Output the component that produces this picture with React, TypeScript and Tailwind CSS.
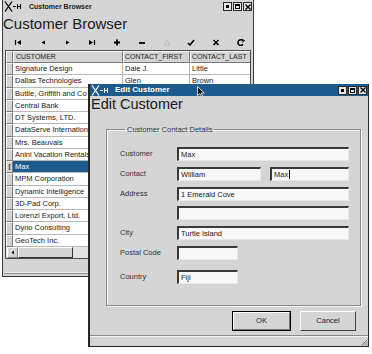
import React from "react";

// contact columns are only visible for the first two rows, the rest sit under the dialog
const rows = [
  ["Signature Design", "Dale J.", "Little"],
  ["Dallas Technologies", "Glen", "Brown"],
  ["Buttle, Griffith and Co", "", ""],
  ["Central Bank", "", ""],
  ["DT Systems, LTD.", "", ""],
  ["DataServe International", "", ""],
  ["Mrs. Beauvais", "", ""],
  ["Anini Vacation Rentals", "", ""],
  ["Max", "", ""],
  ["MPM Corporation", "", ""],
  ["Dynamic Intelligence", "", ""],
  ["3D-Pad Corp.", "", ""],
  ["Lorenzi Export, Ltd.", "", ""],
  ["Dyno Consulting", "", ""],
  ["GeoTech Inc.", "", ""],
];

const raised = "border border-t-white border-l-white border-r-[#7a7a7a] border-b-[#7a7a7a]";

function XLogo({ white }: { white?: boolean }) {
  const c = white ? "#ffffff" : "#000000";
  return (
    <svg width="19" height="11" viewBox="0 0 19 11" className="ml-[1px] shrink-0">
      <path d="M1 0.5 L8 10.5 M8 0.5 L1 10.5" stroke={c} strokeWidth="1.3" fill="none" />
      <path d="M9 5.5 H12 M13.5 3 V8 M13.5 5.5 H16.5 M16.5 3 V8" stroke={c} strokeWidth="1" fill="none" />
    </svg>
  );
}

function WinControls() {
  const box = "flex h-[9px] w-[9px] items-center justify-center border border-[#2a2a2a] bg-[#e6e6e6]";
  return (
    <div className="ml-auto mr-[1px] flex gap-[1px]">
      <div className={box}>
        <div className="h-[3px] w-[3px] bg-black" />
      </div>
      <div className={box}>
        <div className="h-[5px] w-[5px] border border-t-2 border-black" />
      </div>
      <div className={box}>
        <svg width="6" height="6" viewBox="0 0 6 6">
          <path d="M0.5 0.5 L5.5 5.5 M5.5 0.5 L0.5 5.5" stroke="#000" strokeWidth="1.4" />
        </svg>
      </div>
    </div>
  );
}

function ToolIcon({ kind }: { kind: string }) {
  const s = { width: 8, height: 7, viewBox: "0 0 8 7" };
  switch (kind) {
    case "first":
      return (
        <svg {...s}>
          <path d="M1.5 1 V6" stroke="#000" strokeWidth="1.2" />
          <path d="M7 1 L3 3.5 L7 6 Z" fill="#000" />
        </svg>
      );
    case "prev":
      return (
        <svg {...s}>
          <path d="M6 1.5 L2.5 3.5 L6 5.5 Z" fill="#000" />
        </svg>
      );
    case "next":
      return (
        <svg {...s}>
          <path d="M2 1.5 L5.5 3.5 L2 5.5 Z" fill="#000" />
        </svg>
      );
    case "last":
      return (
        <svg {...s}>
          <path d="M1 1 L5 3.5 L1 6 Z" fill="#000" />
          <path d="M6.5 1 V6" stroke="#000" strokeWidth="1.2" />
        </svg>
      );
    case "plus":
      return (
        <svg {...s}>
          <path d="M4 0.5 V6.5 M1 3.5 H7" stroke="#000" strokeWidth="1.8" />
        </svg>
      );
    case "minus":
      return (
        <svg {...s}>
          <path d="M1 4 H7" stroke="#000" strokeWidth="1.8" />
        </svg>
      );
    case "edit":
      return (
        <svg {...s}>
          <path d="M4 1 L7 6 H1 Z" fill="none" stroke="#bdbdbd" strokeWidth="1" />
        </svg>
      );
    case "ok":
      return (
        <svg {...s}>
          <path d="M1 4 L3 6 L7 1" fill="none" stroke="#000" strokeWidth="1.6" />
        </svg>
      );
    case "cancel":
      return (
        <svg {...s}>
          <path d="M1.5 1 L6.5 6 M6.5 1 L1.5 6" stroke="#000" strokeWidth="1.6" />
        </svg>
      );
    default:
      return (
        <svg {...s}>
          <path d="M6 2 A2.8 2.8 0 1 0 6 5.2" fill="none" stroke="#000" strokeWidth="1.5" />
          <path d="M5 0.3 L7.6 1.6 L5.4 3.2" fill="none" stroke="#000" strokeWidth="1" />
        </svg>
      );
  }
}

function Toolbar() {
  const kinds = ["first", "prev", "next", "last", "plus", "minus", "edit", "ok", "cancel", "refresh"];
  return (
    <div className="ml-[3px] flex h-[15px] items-center">
      {kinds.map((k) => (
        <div key={k} className="flex flex-1 items-center justify-center">
          <ToolIcon kind={k} />
        </div>
      ))}
    </div>
  );
}

function Table() {
  return (
    <div className="mx-[2px] flex flex-col overflow-hidden border border-[#4a4a4a] bg-white">
      <div className="flex h-[12px] shrink-0 bg-[#d4d4d4] text-[7px] leading-[10px]">
        <div className={`w-[7px] shrink-0 ${raised}`} />
        <div className={`w-[110px] shrink-0 pl-[2px] ${raised}`}>CUSTOMER</div>
        <div className={`w-[67px] shrink-0 pl-[1px] ${raised}`}>CONTACT_FIRST</div>
        <div className={`w-[70px] shrink-0 overflow-hidden whitespace-nowrap pl-[1px] ${raised}`}>CONTACT_LAST</div>
      </div>
      {rows.map((r, i) => {
        const sel = i === 8;
        return (
          <div key={i} className="flex h-[12.27px] shrink-0 text-[7.5px] leading-[11px]">
            <div className={`flex w-[7px] shrink-0 items-center justify-center bg-[#d4d4d4] ${raised}`}>
              {sel && <span className="font-['Liberation_Serif',serif] text-[9px] leading-none">I</span>}
            </div>
            <div
              className={`w-[110px] shrink-0 overflow-hidden whitespace-nowrap border-b border-r border-[#b8b8b8] pl-[2px] ${
                sel ? "bg-[#1d5b8e] text-white" : ""
              }`}
            >
              {r[0]}
            </div>
            <div
              className={`w-[67px] shrink-0 overflow-hidden whitespace-nowrap border-b border-r border-[#b8b8b8] pl-[2px] ${
                sel ? "bg-[#1d5b8e] text-white" : ""
              }`}
            >
              {r[1]}
            </div>
            <div
              className={`w-[70px] shrink-0 overflow-hidden whitespace-nowrap border-b border-[#b8b8b8] pl-[2px] ${
                sel ? "bg-[#1d5b8e] text-white" : ""
              }`}
            >
              {r[2]}
            </div>
          </div>
        );
      })}
      <div className="flex h-[11px] shrink-0 bg-[#e2e2e2]">
        <div className={`ml-[1px] flex w-[11px] shrink-0 items-center justify-center bg-[#d4d4d4] ${raised}`}>
          <svg width="4" height="5" viewBox="0 0 4 5">
            <path d="M3 0.5 L0.5 2.5 L3 4.5 Z" fill="#000" />
          </svg>
        </div>
        <div className={`w-[55px] shrink-0 bg-[#d4d4d4] ${raised} border-b-[#333] border-r-[#333]`} />
      </div>
    </div>
  );
}

function BrowserWindow() {
  return (
    <div className="absolute left-[2px] top-0 flex h-[277px] w-[252px] flex-col border-x border-b border-[#3a3a3a] bg-[#d5d5d5]">
      <div className="flex h-[13px] shrink-0 items-center">
        <XLogo />
        <span className="ml-[6px] text-[7px] font-bold leading-none">Customer Browser</span>
        <WinControls />
      </div>
      <div className="h-[22px] shrink-0 text-[15px] leading-[22px]">Customer Browser</div>
      <Toolbar />
      <Table />
      <div className="mx-[1px] mt-[4px] h-[10px] border-b border-[#f2f2f2] shadow-[0_1px_0_#8a8a8a]" />
    </div>
  );
}

function Field({ w, value, cursor }: { w: string; value?: string; cursor?: boolean }) {
  return (
    <div
      className={`${w} flex h-[14px] shrink-0 items-center border-b border-l-2 border-r border-t-2 border-b-[#e8e8e8] border-l-[#3a3a3a] border-r-[#e8e8e8] border-t-[#3a3a3a] bg-[#f8f8f8] pl-[2px] text-[7.5px]`}
    >
      {value}
      {cursor && <span className="ml-[1px] h-[9px] w-px bg-black" />}
    </div>
  );
}

function Row({ label, children, mt }: { label: string; children: React.ReactNode; mt: string }) {
  return (
    <div className={`flex items-center ${mt}`}>
      <div className="w-[57px] shrink-0 text-[7.5px] text-[#333]">{label}</div>
      {children}
    </div>
  );
}

function EditDialog() {
  return (
    <div className="absolute left-[88px] top-[84px] flex h-[263px] w-[281px] flex-col border-b border-l-2 border-r border-[#262626] bg-[#d5d5d5]">
      <div className="flex h-[12px] shrink-0 items-center bg-[#1d5b8e] text-white">
        <XLogo white />
        <span className="ml-[5px] text-[8px] font-bold leading-none">Edit Customer</span>
        <WinControls />
      </div>
      <div className="h-[17px] shrink-0 pl-[1px] text-[14.5px] leading-[17px]">Edit Customer</div>
      <fieldset className="ml-[16px] mr-[7px] mt-[12px] border border-[#8a8a8a] pb-[21px] pl-[13px] shadow-[inset_1px_1px_0_#f4f4f4,1px_1px_0_#f4f4f4]">
        <legend className="ml-[5px] px-[2px] text-[7.5px] leading-[9px] text-[#333]">Customer Contact Details</legend>
        <Row label="Customer" mt="mt-[13px]">
          <Field w="w-[172px]" value="Max" />
        </Row>
        <Row label="Contact" mt="mt-[6px]">
          <Field w="w-[84px]" value="William" />
          <div className="w-[9px]" />
          <Field w="w-[79px]" value="Max" cursor />
        </Row>
        <Row label="Address" mt="mt-[6px]">
          <Field w="w-[172px]" value="1 Emerald Cove" />
        </Row>
        <Row label="" mt="mt-[5px]">
          <Field w="w-[172px]" />
        </Row>
        <Row label="City" mt="mt-[6px]">
          <Field w="w-[172px]" value="Turtle Island" />
        </Row>
        <Row label="Postal Code" mt="mt-[6px]">
          <Field w="w-[61px]" />
        </Row>
        <Row label="Country" mt="mt-[10px]">
          <Field w="w-[61px]" value="Fiji" />
        </Row>
      </fieldset>
      <div className="mr-[12px] mt-[5px] flex justify-end gap-[9px] text-[7.5px]">
        <div className="flex h-[20px] w-[59px] items-center justify-center border border-black">
          <div className={`flex h-full w-full items-center justify-center ${raised}`}>OK</div>
        </div>
        <div className={`flex h-[20px] w-[56px] items-center justify-center ${raised} border-b-[#404040] border-r-[#404040]`}>
          Cancel
        </div>
      </div>
      <div className="mt-auto flex h-[10px] items-end justify-end border-t border-[#f2f2f2] shadow-[0_-1px_0_#8a8a8a]">
        <svg width="8" height="8" viewBox="0 0 8 8">
          <path d="M7.5 1.5 L1.5 7.5 M7.5 4 L4 7.5 M7.5 6.5 L6.5 7.5" stroke="#666" strokeWidth="0.8" />
        </svg>
      </div>
    </div>
  );
}

function Pointer() {
  return (
    <svg width="8" height="12" viewBox="0 0 8 12" className="absolute left-[197px] top-[86px]">
      <path d="M0.5 0.5 V9.5 L2.8 7.4 L4.3 10.8 L5.6 10.2 L4.2 7 H7.3 Z" fill="#000" stroke="#fff" strokeWidth="0.8" />
    </svg>
  );
}

export default function App() {
  return (
    <div className="relative h-[354px] w-[372px] overflow-hidden bg-white font-['Liberation_Sans',Arial,sans-serif] text-[#1a1a1a] antialiased">
      <BrowserWindow />
      <EditDialog />
      <Pointer />
    </div>
  );
}
